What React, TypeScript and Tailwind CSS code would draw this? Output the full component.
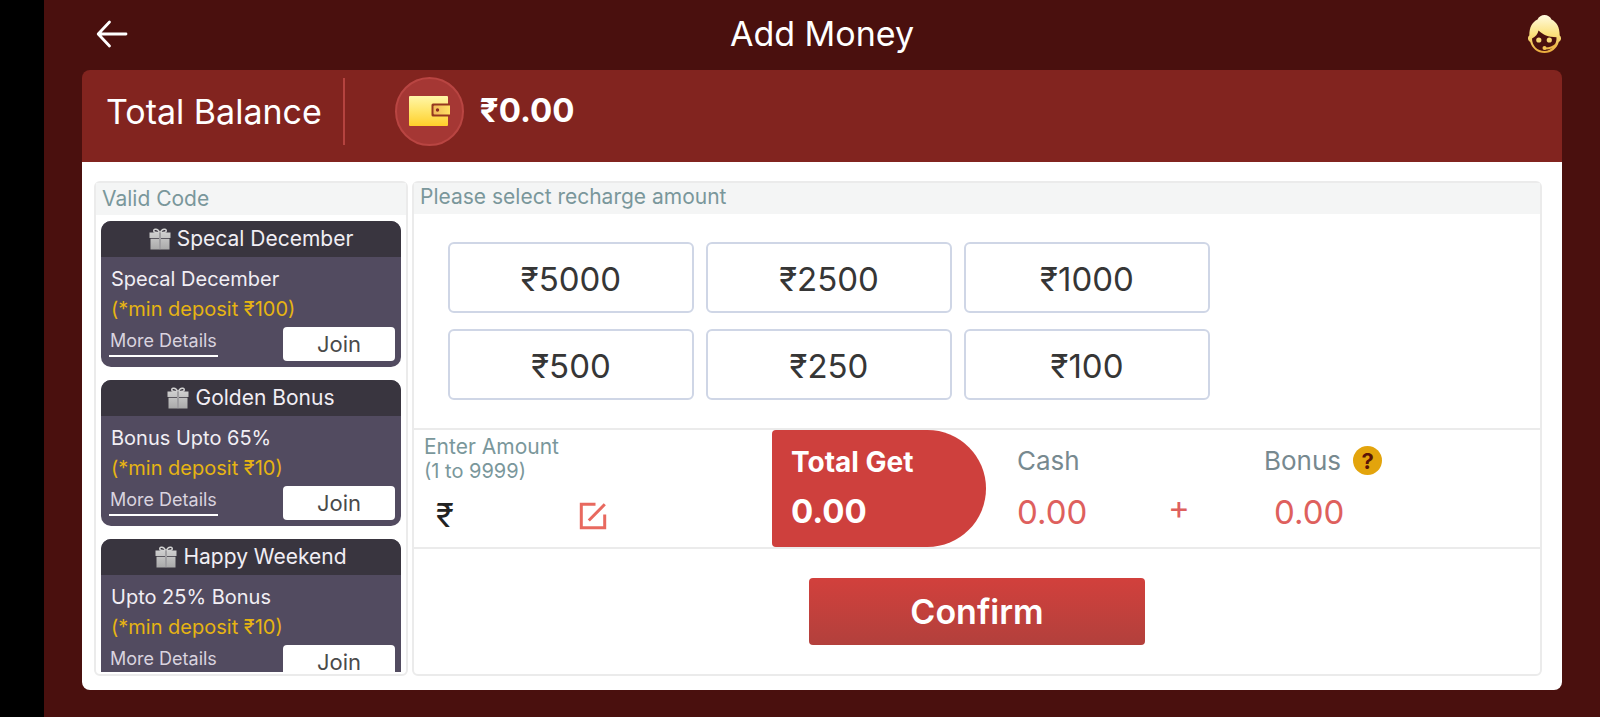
import { useState } from "react";

type Offer = { title: string; text: string; min: number };

const offers: Offer[] = [
  { title: "Specal December", text: "Specal December", min: 100 },
  { title: "Golden Bonus", text: "Bonus Upto 65%", min: 10 },
  { title: "Happy Weekend", text: "Upto 25% Bonus", min: 10 },
];

const amounts = [5000, 2500, 1000, 500, 250, 100];

function BackIcon() {
  return (
    <svg viewBox="0 0 32 28" className="h-7 w-8" fill="none" stroke="#fff" strokeWidth="2.8" strokeLinecap="round" strokeLinejoin="round" aria-hidden="true">
      <path d="M13.500 2 2.200 14l11.300 12M2.500 14H30" />
    </svg>
  );
}

function SupportIcon() {
  return (
    <svg viewBox="0 0 33 38" className="h-[38px] w-[33px]" aria-hidden="true">
      <defs>
        <linearGradient id="hair" x1="0" y1="0" x2="0" y2="1">
          <stop offset="0" stopColor="#fffbe0" />
          <stop offset="0.5" stopColor="#fbe27e" />
          <stop offset="1" stopColor="#e8a83a" />
        </linearGradient>
      </defs>
      <path
        fill="url(#hair)"
        d="M9.500 4.600C10.800 1.500 13.500 0 16.500 0s5.700 1.500 7 4.600C28.800 7.200 31.600 12 31.700 20.500c.9.800 1.300 1.700 1.300 3s-.6 2.600-2.100 3.200C28.800 33.500 23.600 38 16.500 38S4.200 33.500 2.100 26.700C.6 26.100 0 24.800 0 23.500s.4-2.200 1.300-3C1.400 12 4.200 7.200 9.500 4.600Z"
      />
      <path fill="#4a100e" d="M10.500 15.500c4.500 4.300 9.500 6.500 18 6.800.6 7-4.800 13.700-12 13.700S4 30.500 4 23.500c3.500-1.500 5.800-4.500 6.500-8Z" />
      <circle cx="10.800" cy="25" r="2.600" fill="#f8d874" />
      <circle cx="21.300" cy="25" r="2.600" fill="#f8d874" />
      <path d="M28.200 29.500c-3 2.800-6.800 3.900-11 3.900" fill="none" stroke="#eeb84a" strokeWidth="2" strokeLinecap="round" />
      <circle cx="16.500" cy="33" r="2" fill="#f4c558" />
    </svg>
  );
}

function WalletIcon() {
  return (
    <svg viewBox="0 0 41 30" className="h-[30px] w-[41px]" aria-hidden="true">
      <defs>
        <linearGradient id="gold" x1="0" y1="0" x2="0" y2="1">
          <stop offset="0" stopColor="#fff6a8" />
          <stop offset="0.5" stopColor="#ffe568" />
          <stop offset="1" stopColor="#ffcf2a" />
        </linearGradient>
        <linearGradient id="clasp" x1="0" y1="0" x2="1" y2="0">
          <stop offset="0" stopColor="#f0b95a" />
          <stop offset="1" stopColor="#ffe263" />
        </linearGradient>
      </defs>
      <path fill="url(#gold)" d="M1 0h37a1 1 0 0 1 1 1v28a1 1 0 0 1-1 1H1a1 1 0 0 1-1-1V1a1 1 0 0 1 1-1Z" />
      <path fill="#95381f" d="M41 7.500H24a1.500 1.500 0 0 0-1.500 1.500v10a1.500 1.500 0 0 0 1.500 1.500h17Z" />
      <path fill="url(#clasp)" d="M41 9.500H25.500a1 1 0 0 0-1 1v7a1 1 0 0 0 1 1H41Z" />
      <circle cx="28.500" cy="14" r="1.700" fill="#8d2b20" />
    </svg>
  );
}

function GiftIcon() {
  return (
    <svg viewBox="0 0 22 22" className="h-[22px] w-[22px] shrink-0" aria-hidden="true">
      <defs>
        <linearGradient id="silver" x1="0" y1="0" x2="0" y2="1">
          <stop offset="0" stopColor="#cfcfcf" />
          <stop offset="1" stopColor="#a9a9a9" />
        </linearGradient>
      </defs>
      <g fill="none" stroke="#d2d2d2" strokeWidth="1.500">
        <path d="M10.700 4.500C9.500 1.800 7.500.9 6 1.300c-1.800.5-1.600 2.600.2 2.900 1.500.3 3 .3 4.500.3Z" />
        <path d="M11.300 4.500c1.200-2.700 3.200-3.600 4.700-3.200 1.800.5 1.600 2.600-.2 2.900-1.500.3-3 .3-4.500.3Z" />
      </g>
      <path fill="url(#silver)" d="M.5 4.500h9.500V10H.5zM12 4.500h9.500V10H12zM1.500 10.800H10v10.700H1.500zM12 10.800h8.500v10.700H12z" />
      <path fill="#77757a" d="M10 4.500h2v17h-2z" />
      <path fill="#c9c9c9" d="M10.500 4.500h1v17h-1z" />
    </svg>
  );
}

function EditIcon() {
  return (
    <svg viewBox="0 0 28 28" className="size-7" fill="none" stroke="#e8695f" strokeWidth="3" aria-hidden="true">
      <path d="M16.500 2.300H2.300v23.400h23.400V12.500M9.800 18.500 25.800 2.300" />
    </svg>
  );
}

function OfferCard({ title, text, min }: Offer) {
  return (
    <article className="shrink-0 overflow-hidden rounded-[10px] bg-[#524b60] text-[#f1eef4]">
      <h3 className="flex h-9 items-center justify-center gap-1.5 bg-[#39353f] text-[21px]">
        <GiftIcon />
        {title}
      </h3>
      <div className="h-[110px] px-2.5 pt-[7px] pr-1.5">
        <p className="text-[20px] leading-[30px]">{text}</p>
        <p className="text-[20px] leading-[30px] text-[#e6b412]">(*min deposit ₹{min})</p>
        <div className="flex items-start justify-between pt-[3px]">
          <a href="#details" className="-ml-0.5 border-b-2 border-white px-px text-[18px] leading-7 text-[#d9d3df]">
            More Details
          </a>
          <button type="button" className="h-[34px] w-28 rounded bg-white text-[22px] text-[#4a4a4a]">
            Join
          </button>
        </div>
      </div>
    </article>
  );
}

export default function App() {
  const [amount, setAmount] = useState("");

  return (
    <div className="flex h-screen overflow-hidden bg-[#4a100e] font-['Inter',sans-serif]">
      <div className="w-11 shrink-0 bg-black" />
      <div className="flex min-w-0 flex-1 flex-col px-[38px] pb-[27px]">
        <header className="grid h-[70px] shrink-0 grid-cols-3 items-center pb-0.5 text-white">
          <button type="button" aria-label="Back" className="ml-3.5 w-8">
            <BackIcon />
          </button>
          <h1 className="text-center text-[34px] leading-none">Add Money</h1>
          <button type="button" aria-label="Customer support" className="mr-px w-[33px] justify-self-end">
            <SupportIcon />
          </button>
        </header>

        <main className="flex min-h-0 flex-1 flex-col">
          <section className="flex h-[92px] shrink-0 items-center rounded-t-lg bg-[#82241f] pb-2.5 text-[34px] text-white">
            <h2 className="pl-6">Total Balance</h2>
            <div className="ml-[21px] h-[67px] w-0.5 bg-[#b5433f]" />
            <div className="ml-[50px] grid size-[69px] place-items-center rounded-full border-2 border-[#b94542] bg-[#a53734]">
              <WalletIcon />
            </div>
            <strong className="ml-4 text-[33px] font-bold">₹0.00</strong>
          </section>

          <div className="flex min-h-0 flex-1 gap-1 rounded-b-lg bg-white pt-[19px] pr-5 pb-3.5 pl-3">
            <aside className="flex w-[314px] shrink-0 flex-col rounded-md border-2 border-[#ebebeb] pb-0.5">
              <h2 className="h-8 shrink-0 bg-[#f4f5f5] pl-1.5 text-[21px] leading-8 text-[#7a979b]">Valid Code</h2>
              <div className="mx-[5px] mt-1.5 flex min-h-0 flex-1 flex-col gap-[13px] overflow-hidden">
                {offers.map((o) => (
                  <OfferCard key={o.title} {...o} />
                ))}
              </div>
            </aside>

            <section className="flex min-w-0 flex-1 flex-col rounded-md border-2 border-[#ebebeb]">
              <h2 className="h-[31px] shrink-0 bg-[#f4f5f5] pl-1.5 text-[21px] leading-7 text-[#7a979b]">Please select recharge amount</h2>
              <div className="grid grid-cols-[repeat(3,246px)] gap-x-3 gap-y-4 px-[34px] pt-7 pb-7">
                {amounts.map((a) => (
                  <button
                    key={a}
                    type="button"
                    onClick={() => setAmount(String(a))}
                    className="h-[71px] rounded-md border-2 border-[#cfd6e6] bg-white pt-1 text-[33px] leading-none text-[#363636]"
                  >
                    ₹{a}
                  </button>
                ))}
              </div>

              <div className="flex h-[121px] shrink-0 border-y-2 border-[#ebebeb]">
                <div className="w-[358px] shrink-0 pt-[5px] pl-2.5">
                  <label htmlFor="amount" className="block text-[21px] leading-6 text-[#7a979b]">
                    Enter Amount
                    <span className="block text-[20px]">(1 to 9999)</span>
                  </label>
                  <div className="flex h-[66px] items-center pl-3">
                    <span className="w-5 text-[33px] text-[#222]">₹</span>
                    <input
                      id="amount"
                      inputMode="numeric"
                      value={amount}
                      onChange={(e) => setAmount(e.target.value)}
                      className="w-[123px] bg-transparent pl-1 text-[33px] outline-none"
                    />
                    <button type="button" aria-label="Edit amount">
                      <EditIcon />
                    </button>
                  </div>
                </div>
                <div className="h-[117px] w-[214px] shrink-0 rounded-l rounded-r-[59px] bg-[#ce403d] pt-2 pl-[19px] font-bold text-white">
                  <p className="text-[28px] leading-[49px]">Total Get</p>
                  <p className="text-[33px] leading-[49px]">0.00</p>
                </div>
                <div className="w-[142px] shrink-0 pt-1.5 pl-[31px]">
                  <p className="text-[26px] leading-[49px] text-[#77898f]">Cash</p>
                  <p className="text-[33px] leading-[54px] text-[#de605d]">0.00</p>
                </div>
                <p className="w-[136px] shrink-0 pt-[50px] pl-10 text-[33px] leading-[54px] text-[#de605d]">+</p>
                <div className="pt-1.5">
                  <p className="flex items-center gap-3 text-[26px] leading-[49px] text-[#77898f]">
                    Bonus
                    <button type="button" aria-label="About bonus" className="size-[29px] rounded-full bg-[#e3a40c] text-[22px] leading-none font-bold text-[#5a1408]">
                      ?
                    </button>
                  </p>
                  <p className="pl-2.5 text-[33px] leading-[54px] text-[#de605d]">0.00</p>
                </div>
              </div>

              <button
                type="button"
                className="mt-[29px] h-[67px] w-[336px] self-center rounded bg-linear-to-b from-[#d2403c] to-[#b2403c] text-[34px] font-semibold text-white"
              >
                Confirm
              </button>
            </section>
          </div>
        </main>
      </div>
    </div>
  );
}
